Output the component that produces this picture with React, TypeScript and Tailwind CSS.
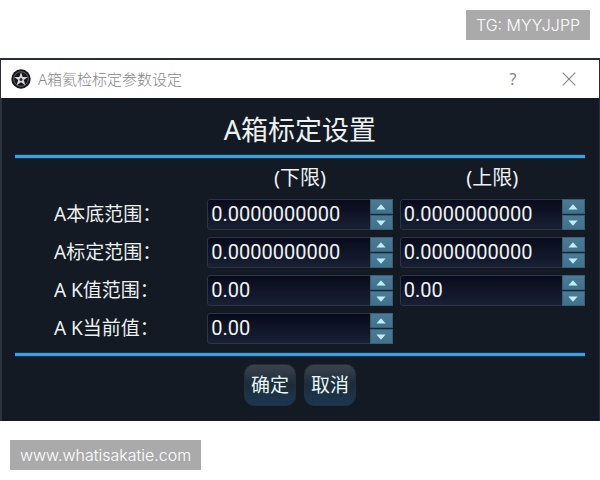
import { useState } from "react";

const rows = [
  { id: "base", label: "A本底范围：", digits: 10, upper: true },
  { id: "calib", label: "A标定范围：", digits: 10, upper: true },
  { id: "k-range", label: "A K值范围：", digits: 2, upper: true },
  { id: "k-current", label: "A K当前值：", digits: 2, upper: false },
];

function StepButton({ up, label, onClick }: { up?: boolean; label: string; onClick: () => void }) {
  return (
    <button
      type="button"
      aria-label={label}
      onClick={onClick}
      className="flex flex-1 items-center justify-center border border-[#376078] bg-linear-to-b from-[#4b7b94] to-[#42718b]"
    >
      <svg viewBox="0 0 10 6" className="h-[6px] w-[10px] fill-[#bdefff]">
        <path d={up ? "M5 .3 9.6 5.6H.4z" : "M.4.4h9.2L5 5.7z"} />
      </svg>
    </button>
  );
}

function SpinBox({ id, digits, label }: { id: string; digits: number; label?: string }) {
  const [value, setValue] = useState((0).toFixed(digits));
  const step = (n: number) => setValue(((Number(value) || 0) + n).toFixed(digits));

  return (
    <div className="flex h-[31px] min-w-0 rounded-[3px] border border-[#2c3544] bg-linear-to-b from-[#080b1b] to-[#192035]">
      <input
        id={id}
        aria-label={label}
        value={value}
        onChange={(e) => setValue(e.target.value)}
        className="min-w-0 flex-1 bg-transparent pl-[3px] font-['Roboto','Noto_Sans_CJK_SC',sans-serif] text-[20px] text-[#f0f2f2] outline-none"
      />
      <div className="-my-px -mr-px flex w-[23px] flex-col gap-px bg-[#142638]">
        <StepButton up label="增加" onClick={() => step(1)} />
        <StepButton label="减少" onClick={() => step(-1)} />
      </div>
    </div>
  );
}

function Divider() {
  return <hr className="h-[5px] border-x-0 border-y border-[#083560] bg-[#479dd0]" />;
}

function TitleBar() {
  return (
    <header className="flex h-[40px] items-center border-t-2 border-l border-[#2c2c40] bg-white pr-[2px] pl-[10px] text-[#858585]">
      <svg viewBox="0 0 20 20" className="h-[20px] w-[20px]">
        <circle cx="10" cy="10" r="9.7" fill="#171719" />
        <circle cx="10" cy="10" r="7.3" fill="none" stroke="#77777c" strokeWidth=".8" />
        <path d="M10 3.2l1.7 4.7 5 .1-3.9 3.1 1.6 5.1-4.4-3-4.4 3 1.6-5.1L3.3 8l5-.1z" fill="#d8d8da" />
        <circle cx="10" cy="10.4" r="1.500" fill="#29292c" />
      </svg>
      <h1 className="ml-[7px] flex-1 text-[15px] font-light">A箱氦检标定参数设定</h1>
      <button type="button" aria-label="帮助" className="w-[56px] text-[16px]">?</button>
      <button type="button" aria-label="关闭" className="flex w-[56px] justify-center">
        <svg viewBox="0 0 14 14" className="h-[14px] w-[14px]" fill="none" stroke="#858585" strokeWidth="1.1">
          <path d="M.7.7l12.6 12.6M13.3.7L.7 13.3" />
        </svg>
      </button>
    </header>
  );
}

function DialogButton({ children }: { children: string }) {
  return (
    <button
      type="button"
      className="h-[42px] w-[52px] rounded-[10px] border border-[#22303e] bg-linear-to-b from-[#3a434c] via-[#1c2c3a] to-[#1b3752] text-[19px] text-[#e8f8fa]"
    >
      {children}
    </button>
  );
}

export default function App() {
  return (
    <div lang="zh-CN" className="min-h-screen bg-white font-['Noto_Sans','Noto_Sans_CJK_SC',sans-serif]">
      <div className="flex h-[58px] justify-end p-[10px]">
        <p className="h-[30px] bg-[#aaaaaa] px-[10px] font-['Inter',sans-serif] text-[16px] leading-[30px] font-light text-white">
          TG: MYYJJPP
        </p>
      </div>

      <main className="border-r border-[#2c2c40] bg-[#131a23]">
        <TitleBar />
        <form
          className="border-l-2 border-[#29343d] pr-[14px] pb-[15px] pl-[13px] text-[#eef1f2]"
          onSubmit={(e) => e.preventDefault()}
        >
          <h2 className="pt-[14px] pb-[6px] text-center text-[27px] leading-[36px]">A箱标定设置</h2>
          <Divider />
          <div className="grid grid-cols-3 gap-[7px] pb-[8px] text-[19px] leading-[31px]">
            <div className="col-start-2 pt-[4px] text-center text-[20px] leading-[29px]">(下限)</div>
            <div className="pt-[4px] text-center text-[20px] leading-[29px]">(上限)</div>
            {rows.map((row) => (
              <div key={row.id} className="col-span-3 grid grid-cols-3 gap-[7px]">
                <label htmlFor={row.id} className="pl-[39px] whitespace-nowrap">{row.label}</label>
                <SpinBox id={row.id} digits={row.digits} />
                {row.upper && <SpinBox id={`${row.id}-upper`} digits={row.digits} label={`${row.label}上限`} />}
              </div>
            ))}
          </div>
          <Divider />
          <div className="flex justify-center gap-[8px] pt-[7px]">
            <DialogButton>确定</DialogButton>
            <DialogButton>取消</DialogButton>
          </div>
        </form>
      </main>

      <footer className="flex px-[10px] pt-[19px]">
        <a
          href="http://www.whatisakatie.com"
          className="h-[30px] bg-[#aaaaaa] px-[10px] font-['Inter',sans-serif] text-[16px] leading-[30px] font-light text-white"
        >
          www.whatisakatie.com
        </a>
      </footer>
    </div>
  );
}
